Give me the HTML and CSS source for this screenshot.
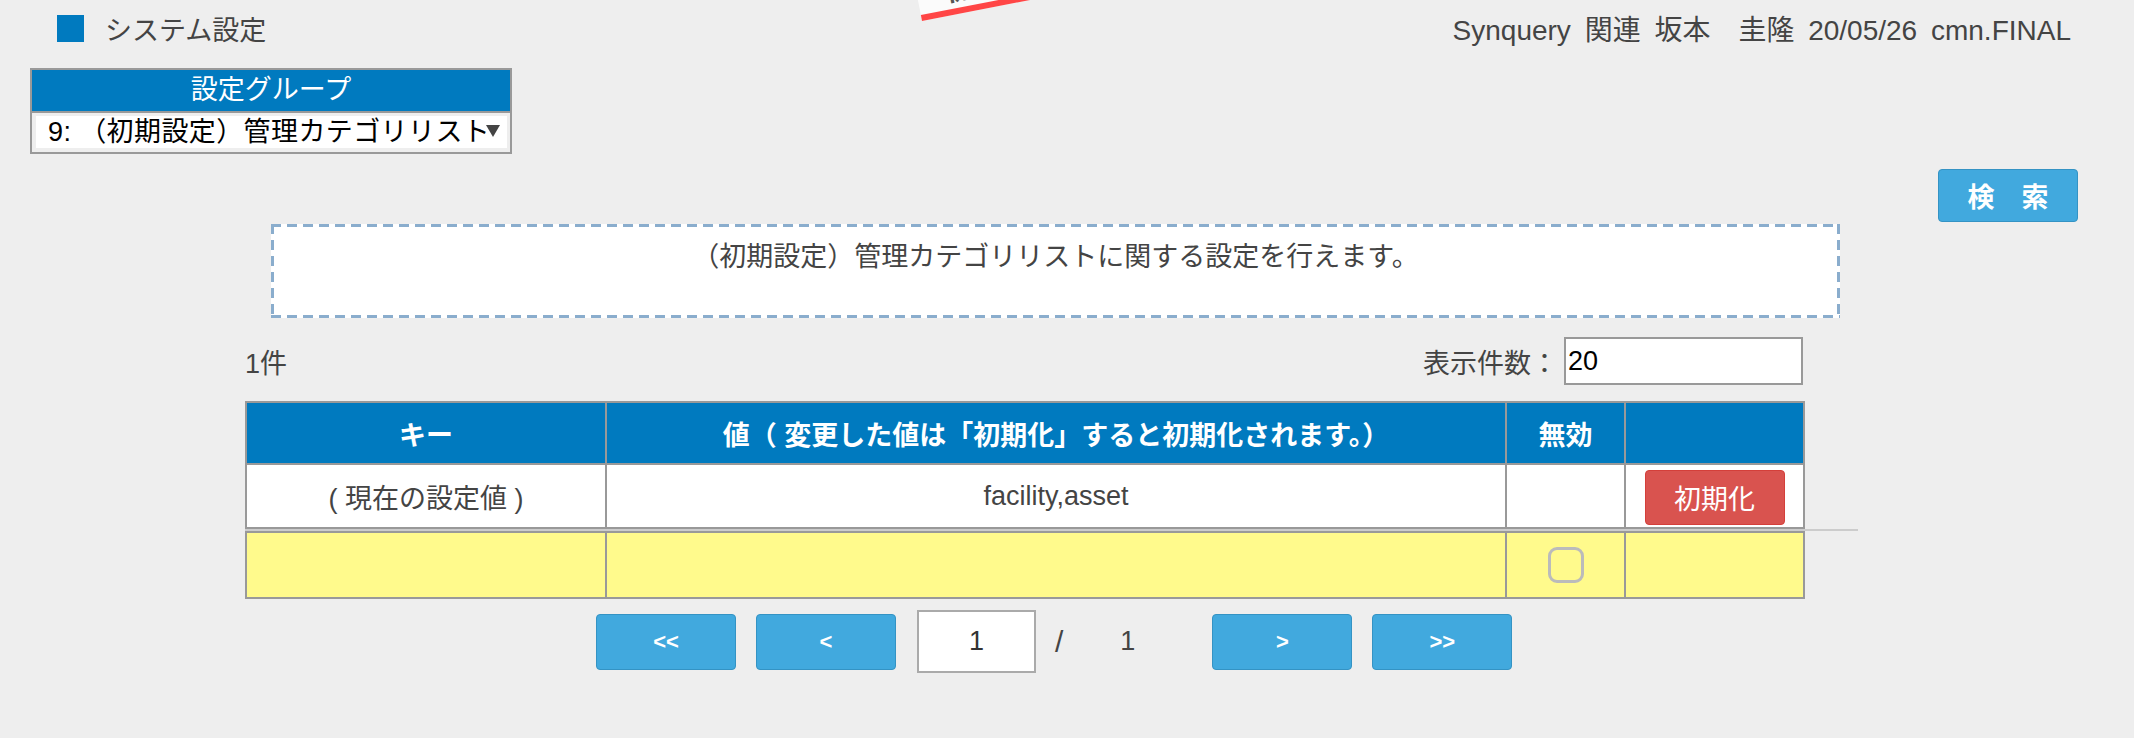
FILE: index.html
```html
<!DOCTYPE html>
<html>
    <head>
        <meta charset="utf-8">
        <title>システム設定</title>
        <link rel="stylesheet" href="styles.css">
    </head>
    <body>
        <div id="ribbon"><span>開発環境</span></div>

        <div id="topbar">
            <div class="title"><span class="title-mark"></span>システム設定</div>
            <div class="user">Synquery 関連 坂本　圭隆 20/05/26 cmn.FINAL</div>
        </div>

        <div id="group">
            <div class="group-head">設定グループ</div>
            <div class="group-body">
                <div class="group-select">
                    <span class="group-value">9: （初期設定）管理カテゴリリスト</span>
                    <span class="caret"></span>
                </div>
            </div>
        </div>

        <div id="actions">
            <button class="btn btn-search">検　索</button>
        </div>

        <div id="description">（初期設定）管理カテゴリリストに関する設定を行えます。</div>

        <div id="list">
            <div class="count-row">
                <span class="count">1件</span>
                <label class="per-page">表示件数：<input type="text" value="20"></label>
            </div>

            <table class="grid grid-current">
                <colgroup>
                    <col class="c-key"><col class="c-val"><col class="c-off"><col class="c-act">
                </colgroup>
                <tr>
                    <th>キー</th>
                    <th>値（ 変更した値は「初期化」すると初期化されます。）</th>
                    <th>無効</th>
                    <th></th>
                </tr>
                <tr class="current">
                    <td>( 現在の設定値 )</td>
                    <td class="latin">facility,asset</td>
                    <td></td>
                    <td><button class="btn btn-reset">初期化</button></td>
                </tr>
            </table>

            <div class="new-row">
                <table class="grid">
                    <colgroup>
                        <col class="c-key"><col class="c-val"><col class="c-off"><col class="c-act">
                    </colgroup>
                    <tr class="edit">
                        <td></td>
                        <td></td>
                        <td><span class="check"></span></td>
                        <td></td>
                    </tr>
                </table>
            </div>

            <div class="pager">
                <button class="btn btn-page">&lt;&lt;</button>
                <button class="btn btn-page">&lt;</button>
                <input class="page-no" type="text" value="1">
                <span class="slash">/</span>
                <span class="total">1</span>
                <button class="btn btn-page">&gt;</button>
                <button class="btn btn-page">&gt;&gt;</button>
            </div>
        </div>
    </body>
</html>
```

FILE: styles.css
```css
html, body {
    height: 100%;
}
body {
    background-color: #eeeeee;
    margin: 0;
    font-family: "Liberation Sans", "Noto Sans CJK JP", sans-serif;
    font-size: 27px;
    color: #444;
    overflow: hidden;
}

/* environment ribbon, mostly above the window */
#ribbon {
    position: absolute;
    left: 922px;
    top: -40px;
    width: 340px;
    height: 61px;
    background-color: #fbfbfb;
    border-bottom: 6px solid #ff4646;
    transform: rotate(-11deg);
    transform-origin: left bottom;
    display: flex;
    align-items: flex-end;
    padding: 0 0 3px 30px;
    box-sizing: border-box;
    color: #555;
    font-weight: bold;
    line-height: 1;
}

#topbar {
    display: flex;
    justify-content: space-between;
    align-items: center;
    height: 56px;
    padding: 0 63px 0 57px;
}

.title {
    display: flex;
    align-items: center;
    gap: 21px;
}

.title-mark {
    width: 27px;
    height: 27px;
    background-color: #007abf;
}

.user {
    font-size: 28px;
    word-spacing: 6px;
}

#group {
    margin: 12px 0 0 30px;
    width: 478px;
    border: 2px solid #999;
    background-color: #eeeeee;
}

.group-head {
    height: 41px;
    line-height: 41px;
    background-color: #007abf;
    border-bottom: 2px solid #999;
    color: #fff;
    text-align: center;
}

.group-body {
    padding: 3px 3px 4px 4px;
}

.group-select {
    position: relative;
    height: 32px;
    line-height: 32px;
    background-color: #fff;
    padding-left: 12px;
    color: #000;
    white-space: nowrap;
    overflow: hidden;
}

.group-value {
    letter-spacing: 0.4px;
}

.caret {
    position: absolute;
    right: 7px;
    top: 9px;
    border-left: 7px solid transparent;
    border-right: 7px solid transparent;
    border-top: 12px solid #444;
}

#actions {
    display: flex;
    justify-content: flex-end;
    margin-top: 15px;
    padding-right: 56px;
}

.btn {
    font-family: "Liberation Sans", "Noto Sans CJK JP", sans-serif;
    color: #fff;
    border-radius: 4px;
    padding: 0;
    cursor: pointer;
}

.btn-search {
    width: 140px;
    height: 53px;
    font-size: 27px;
    font-weight: bold;
    background-color: #41a9de;
    border: 1px solid #3493c4;
}

/* dashed frame drawn with gradients to get the longer dashes */
#description {
    margin: 2px 0 0 271px;
    width: 1569px;
    height: 94px;
    box-sizing: border-box;
    padding-top: 11px;
    text-align: center;
    background:
        repeating-linear-gradient(90deg, #8aadcd 0 10px, transparent 10px 16px) top left / 100% 3px no-repeat,
        repeating-linear-gradient(90deg, #8aadcd 0 10px, transparent 10px 16px) bottom left / 100% 3px no-repeat,
        repeating-linear-gradient(180deg, #8aadcd 0 10px, transparent 10px 16px) top left / 3px 100% no-repeat,
        repeating-linear-gradient(180deg, #8aadcd 0 10px, transparent 10px 16px) top right / 3px 100% no-repeat,
        #fff;
}

#list {
    margin-left: 245px;
    width: 1558px;
}

.count-row {
    display: flex;
    justify-content: space-between;
    align-items: center;
    margin-top: 19px;
}

.per-page {
    display: flex;
    align-items: center;
    gap: 6px;
}

.per-page input {
    width: 239px;
    height: 48px;
    box-sizing: border-box;
    border: 2px solid #999;
    background-color: #fff;
    font-family: "Liberation Sans", sans-serif;
    font-size: 27px;
    color: #000;
    padding: 0 2px;
    outline: none;
}

.grid {
    width: 1558px;
    border-collapse: collapse;
    table-layout: fixed;
}

.grid-current {
    margin-top: 16px;
}

.c-key { width: 360px; }
.c-val { width: 900px; }
.c-off { width: 119px; }
.c-act { width: 179px; }

.grid th,
.grid td {
    border: 2px solid #999;
    padding: 0;
    text-align: center;
}

.grid th {
    height: 60px;
    background-color: #007abf;
    color: #fff;
    font-weight: bold;
}

.current td {
    height: 62px;
    background-color: #fff;
}

.latin {
    font-family: "Liberation Sans", sans-serif;
}

.btn-reset {
    width: 140px;
    height: 55px;
    margin-top: 2px;
    font-size: 27px;
    background-color: #d9534f;
    border: 1px solid #d43f3a;
    vertical-align: middle;
}

.new-row {
    width: 1613px;
    border-top: 2px solid #ccc;
}

.edit td {
    height: 64px;
    background-color: #fffa8c;
}

.check {
    display: inline-block;
    width: 36px;
    height: 36px;
    box-sizing: border-box;
    border: 3px solid #bbb;
    border-radius: 9px;
    vertical-align: middle;
}

.pager {
    display: flex;
    align-items: center;
    margin-top: 11px;
    padding-left: 351px;
}

.btn-page {
    width: 140px;
    height: 56px;
    margin-right: 20px;
    font-size: 22px;
    font-weight: bold;
    background-color: #41a9de;
    border: 1px solid #3493c4;
}

.page-no {
    width: 119px;
    height: 63px;
    box-sizing: border-box;
    border: 2px solid #aaa;
    background-color: #fff;
    text-align: center;
    font-family: "Liberation Sans", sans-serif;
    font-size: 27px;
    color: #333;
    outline: none;
    margin-left: 1px;
}

.slash {
    margin-left: 19px;
    font-size: 30px;
}

.total {
    margin: 0 77px 0 57px;
}
```
